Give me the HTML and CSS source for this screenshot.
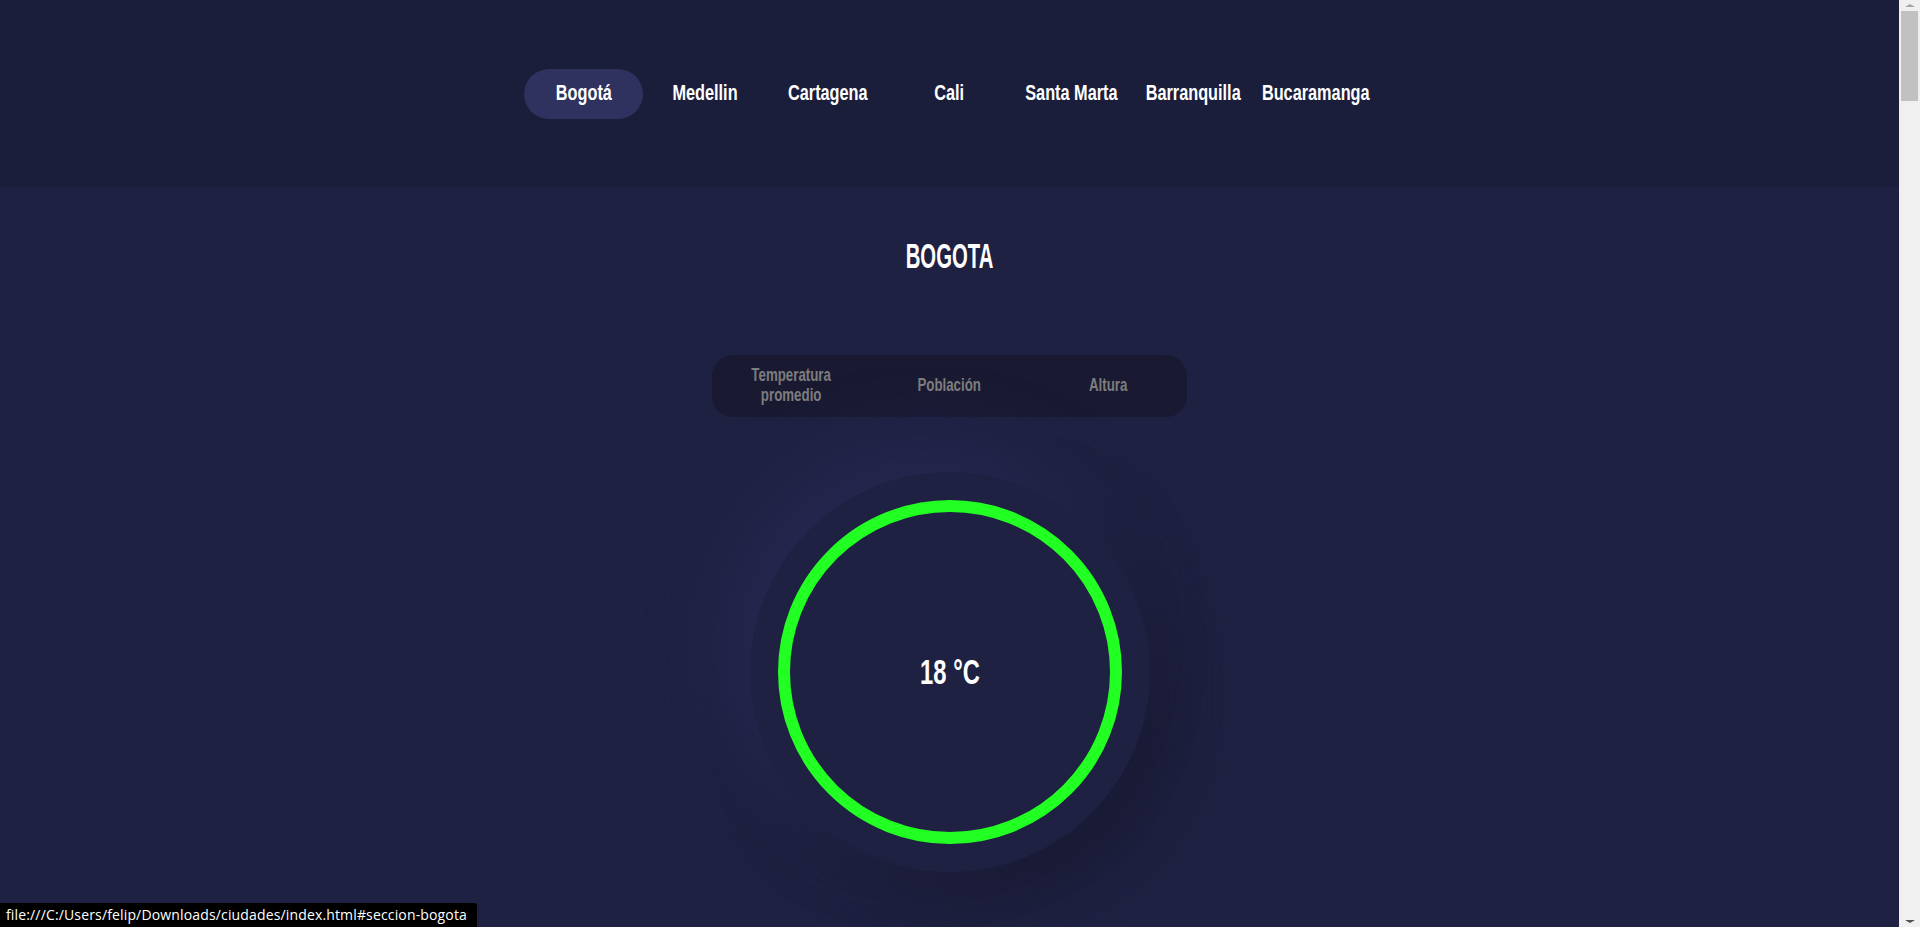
FILE: index.html
```html
<!DOCTYPE html>
<html lang="es">
<head>
<meta charset="utf-8">
<title>Ciudades de Colombia</title>
<link rel="stylesheet" href="styles.css">
</head>
<body>
<div class="page">
  <header class="header">
    <nav class="nav">
      <a class="nav-item active" href="#seccion-bogota"><span class="nav-label">Bogotá</span></a>
      <a class="nav-item" href="#seccion-medellin"><span class="nav-label">Medellin</span></a>
      <a class="nav-item" href="#seccion-cartagena"><span class="nav-label">Cartagena</span></a>
      <a class="nav-item" href="#seccion-cali"><span class="nav-label">Cali</span></a>
      <a class="nav-item" href="#seccion-santa-marta"><span class="nav-label">Santa Marta</span></a>
      <a class="nav-item" href="#seccion-barranquilla"><span class="nav-label">Barranquilla</span></a>
      <a class="nav-item" href="#seccion-bucaramanga"><span class="nav-label">Bucaramanga</span></a>
    </nav>
  </header>
  <main class="main" id="seccion-bogota">
    <h1 class="city-title">BOGOTA</h1>
    <div class="tabs">
      <div class="tab">Temperatura promedio</div>
      <div class="tab">Población</div>
      <div class="tab">Altura</div>
    </div>
    <div class="gauge">
      <svg class="ring" width="344" height="344" viewBox="0 0 344 344">
        <circle cx="172" cy="172" r="166" fill="none" stroke="#22ff22" stroke-width="12"/>
      </svg>
      <div class="gauge-value">18 °C</div>
    </div>
  </main>
</div>
<div class="scrollbar">
  <div class="sb-arrow sb-up"></div>
  <div class="sb-thumb"></div>
  <div class="sb-arrow sb-down"></div>
</div>
<div class="status">file:///C:/Users/felip/Downloads/ciudades/index.html#seccion-bogota</div>
</body>
</html>
```

FILE: styles.css
```css
* { box-sizing: border-box; }
html, body { margin: 0; padding: 0; height: 100%; overflow: hidden; }
body {
  background: #1f2142;
  font-family: "Liberation Sans", Arial, sans-serif;
  font-weight: bold;
  color: #ffffff;
}
.page {
  width: calc(100% - 21px);
  min-height: 100%;
}
.header {
  height: 187px;
  background: #1b1e3b;
  display: flex;
  align-items: center;
  justify-content: center;
}
.nav {
  display: flex;
  gap: 3px;
}
.nav-item {
  width: 119px;
  height: 50px;
  border-radius: 25px;
  display: flex;
  align-items: center;
  justify-content: center;
  padding-bottom: 2px;
  color: #ffffff;
  text-decoration: none;
  white-space: nowrap;
}
.nav-item.active { background: #2f315f; }
.nav-label {
  display: inline-block;
  font-size: 22px;
  line-height: 26px;
  transform: scaleX(0.74);
}
.main {
  display: flex;
  flex-direction: column;
  align-items: center;
  padding-top: 50px;
}
.city-title {
  margin: 0;
  font-size: 35px;
  line-height: 38px;
  color: #ffffff;
  transform: scaleX(0.58);
}
.tabs {
  margin-top: 80px;
  width: 475px;
  height: 62px;
  border-radius: 21px;
  background: #191a32;
  display: grid;
  grid-template-columns: repeat(3, 1fr);
  align-items: center;
}
.tab {
  color: #7d7d7d;
  font-size: 19px;
  line-height: 20px;
  text-align: center;
  padding: 0 8px 2px;
  transform: scaleX(0.7);
}
.gauge {
  margin-top: 55px;
  width: 400px;
  height: 400px;
  border-radius: 50%;
  background: #1f2142;
  box-shadow: -25px -25px 70px #262850, 22px 22px 60px #181930;
  display: grid;
  place-items: center;
}
.ring, .gauge-value { grid-area: 1 / 1; }
.gauge-value {
  font-size: 35px;
  line-height: 36px;
  transform: scaleX(0.68);
}
.scrollbar {
  position: fixed;
  top: 0;
  right: 0;
  width: 21px;
  height: 100%;
  background: #f0f0f0;
}
.sb-thumb {
  position: absolute;
  left: 2px;
  right: 2px;
  top: 11px;
  height: 90px;
  background: #c1c1c1;
}
.sb-arrow {
  position: absolute;
  left: 6px;
  width: 0;
  height: 0;
  border-left: 5px solid transparent;
  border-right: 5px solid transparent;
}
.sb-up { top: 4px; border-bottom: 3px solid #a3a3a3; }
.sb-down { bottom: 4px; border-top: 3px solid #505050; }
.status {
  position: fixed;
  left: 0;
  bottom: 0;
  height: 24px;
  padding: 0 10px 0 6px;
  background: #000000;
  border-top-right-radius: 3px;
  color: #ffffff;
  font-family: "Open Sans", "Liberation Sans", sans-serif;
  font-weight: normal;
  font-size: 14px;
  letter-spacing: 0.15px;
  line-height: 24px;
  white-space: nowrap;
}
```
